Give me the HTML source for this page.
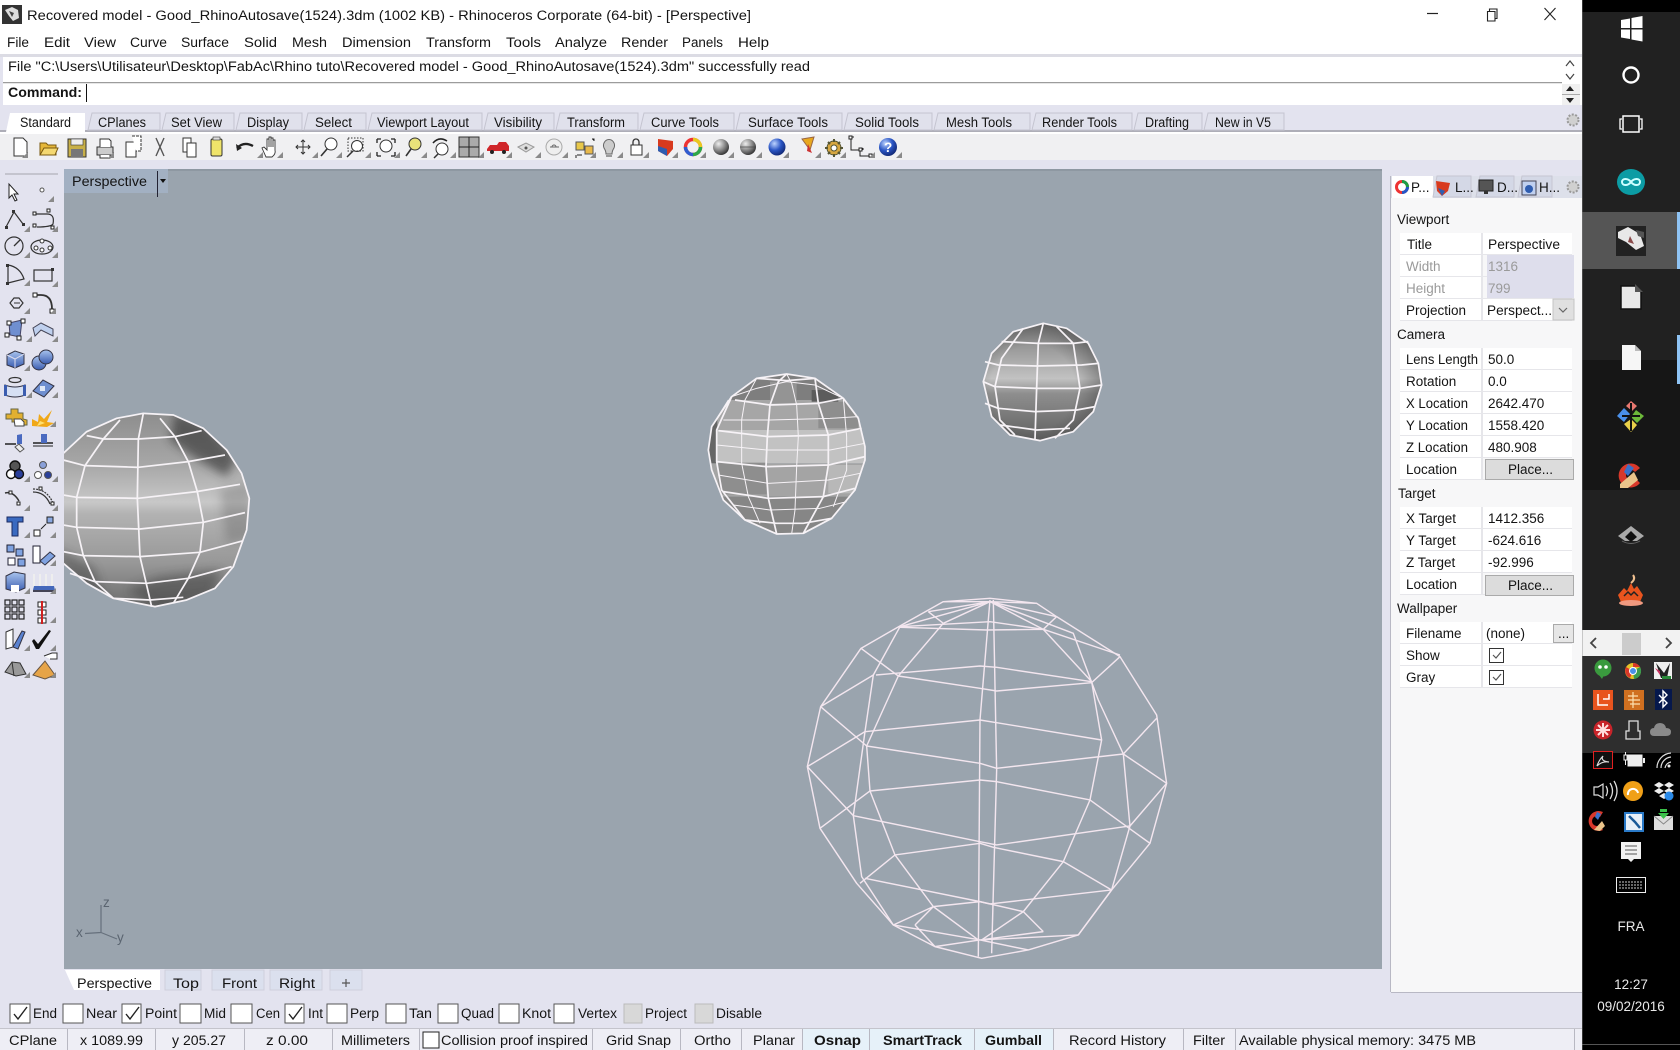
<!DOCTYPE html>
<html lang="en">
<head>
<meta charset="utf-8">
<title>Rhinoceros</title>
<style>
html,body{margin:0;padding:0;background:#e3e3ef;width:1680px;height:1050px;overflow:hidden}
svg{display:block;filter:blur(.3px)}
text{font-family:"Liberation Sans",sans-serif;font-size:13.5px;fill:#141414}
.b{font-weight:bold}
.g{fill:#9a9a9a}
.w{fill:#e8e8e8}
.ln{fill:none;stroke:#f6f2f6;stroke-width:5.2;stroke-linejoin:round}
.wf{fill:none;stroke:#f3e6ef;stroke-width:4.3;stroke-linejoin:round}
.ic{fill:none;stroke:#333;stroke-width:1.2}
</style>
</head>
<body>
<svg xmlns="http://www.w3.org/2000/svg" width="1680" height="1050" viewBox="0 0 1680 1050">
<defs>
<path id="f" d="M0 6L6 6L6 0Z" fill="#8a8a8a"/>
<filter id="bl" x="-30%" y="-30%" width="160%" height="160%"><feGaussianBlur stdDeviation="14"/></filter>
<linearGradient id="s1" x1="0" y1="0" x2="0" y2="1">
<stop offset="0" stop-color="#8c8c8c"/><stop offset=".28" stop-color="#a8a8a8"/><stop offset=".46" stop-color="#c8c8c8"/><stop offset=".52" stop-color="#b2b2b2"/><stop offset=".76" stop-color="#989898"/><stop offset="1" stop-color="#6a6a6a"/>
</linearGradient>
<radialGradient id="s1r" cx=".42" cy=".55" r=".6">
<stop offset=".6" stop-color="#333" stop-opacity="0"/><stop offset="1" stop-color="#222" stop-opacity=".55"/>
</radialGradient>
<linearGradient id="s3" x1="0" y1="0" x2="0" y2="1">
<stop offset="0" stop-color="#7a7a7a"/><stop offset=".25" stop-color="#a0a0a0"/><stop offset=".47" stop-color="#c2c2c2"/><stop offset=".6" stop-color="#8e8e8e"/><stop offset="1" stop-color="#606060"/>
</linearGradient>
<linearGradient id="blue" x1="0" y1="0" x2="0" y2="1"><stop offset="0" stop-color="#a9c4ee"/><stop offset="1" stop-color="#3a5cb0"/></linearGradient>
<radialGradient id="ball" cx=".35" cy=".3" r=".8"><stop offset="0" stop-color="#eee"/><stop offset=".6" stop-color="#777"/><stop offset="1" stop-color="#222"/></radialGradient>
<radialGradient id="bball" cx=".35" cy=".3" r=".8"><stop offset="0" stop-color="#bcd3ff"/><stop offset=".5" stop-color="#2a55c4"/><stop offset="1" stop-color="#0c1f66"/></radialGradient>
<clipPath id="vp"><rect x="64" y="169" width="1318" height="800"/></clipPath>
<clipPath id="c1"><polygon points="-90,340 -40,250 10,190 80,125 170,85 250,70 340,75 430,115 500,180 545,250 568,325 560,420 520,530 465,595 380,630 285,650 160,625 80,580 10,520 -40,450"/></clipPath>
</defs>

<!-- base -->
<rect width="1680" height="1050" fill="#e3e3ef"/>
<rect width="1582" height="54" fill="#fff"/>
<rect y="54" width="1582" height="3" fill="#dcdce4"/>
<rect y="57" width="1582" height="48" fill="#fff"/>
<rect y="82" width="1562" height="1" fill="#9c9c9c"/>
<rect y="83" width="1562" height="1" fill="#e6e6e6"/>
<rect x="0" y="57" width="3" height="48" fill="#e3e3ef"/>

<!-- title -->
<rect x="2" y="5" width="20" height="19" fill="#333"/>
<path d="M5 10L12 7L18 10L19 18L13 21L9 16Z" fill="#ddd"/><path d="M9 11L14 13L12 17Z" fill="#444"/>
<text x="27" y="20" textLength="724" lengthAdjust="spacingAndGlyphs">Recovered model - Good_RhinoAutosave(1524).3dm (1002 KB) - Rhinoceros Corporate (64-bit) - [Perspective]</text>
<path d="M1427 13.5H1438" stroke="#222" stroke-width="1.2"/>
<path d="M1487.5 11.5h7.5v9.5h-7.5zM1489.5 11.5v-2.5h7.5v9.5h-2" fill="none" stroke="#222" stroke-width="1.1"/>
<path d="M1544.5 8L1555.5 20M1555.5 8L1544.5 20" stroke="#222" stroke-width="1.1"/>

<!-- menu -->
<g>
<text x="7" y="47" textLength="22" lengthAdjust="spacingAndGlyphs">File</text>
<text x="44" y="47" textLength="26" lengthAdjust="spacingAndGlyphs">Edit</text>
<text x="84" y="47" textLength="32" lengthAdjust="spacingAndGlyphs">View</text>
<text x="130" y="47" textLength="37" lengthAdjust="spacingAndGlyphs">Curve</text>
<text x="181" y="47" textLength="48" lengthAdjust="spacingAndGlyphs">Surface</text>
<text x="244" y="47" textLength="33" lengthAdjust="spacingAndGlyphs">Solid</text>
<text x="292" y="47" textLength="35" lengthAdjust="spacingAndGlyphs">Mesh</text>
<text x="342" y="47" textLength="69" lengthAdjust="spacingAndGlyphs">Dimension</text>
<text x="426" y="47" textLength="65" lengthAdjust="spacingAndGlyphs">Transform</text>
<text x="506" y="47" textLength="35" lengthAdjust="spacingAndGlyphs">Tools</text>
<text x="555" y="47" textLength="52" lengthAdjust="spacingAndGlyphs">Analyze</text>
<text x="621" y="47" textLength="47" lengthAdjust="spacingAndGlyphs">Render</text>
<text x="682" y="47" textLength="41" lengthAdjust="spacingAndGlyphs">Panels</text>
<text x="738" y="47" textLength="31" lengthAdjust="spacingAndGlyphs">Help</text>
</g>

<!-- command -->
<text x="8" y="71" textLength="802" lengthAdjust="spacingAndGlyphs">File "C:\Users\Utilisateur\Desktop\FabAc\Rhino tuto\Recovered model - Good_RhinoAutosave(1524).3dm" successfully read</text>
<text class="b" x="8" y="97" textLength="74" lengthAdjust="spacingAndGlyphs">Command:</text>
<rect x="86" y="84" width="1" height="18" fill="#111"/>
<path d="M1566 66L1570 61L1574 66M1566 74L1570 79L1574 74" fill="none" stroke="#444" stroke-width="1.2"/>
<rect x="1562" y="84" width="18" height="21" fill="#f0f0f0"/>
<path d="M1566 91L1570 86L1574 91ZM1566 98L1570 103L1574 98Z" fill="#222"/>
<rect x="1562" y="94" width="18" height="1" fill="#aaa"/>

<!-- toolbar tabs -->
<rect x="0" y="130" width="1582" height="2" fill="#aeaeb8"/>
<rect x="0" y="132" width="1582" height="2" fill="#fff"/>
<rect x="0" y="134" width="1582" height="26" fill="#f0f0f2"/>
<g fill="#e0e1ec" stroke="#c4c4d0" stroke-width="1">
<path d="M88 130L92 113H160V130ZM162 130L166 113H234V130ZM236 130L240 113H302V130ZM304 130L308 113H366V130ZM368 130L372 113H482V130ZM484 130L488 113H554V130ZM556 130L560 113H638V130ZM640 130L644 113H734V130ZM736 130L740 113H842V130ZM844 130L848 113H932V130ZM934 130L938 113H1030V130ZM1032 130L1036 113H1132V130ZM1134 130L1138 113H1202V130ZM1204 130L1208 113H1284V130Z"/>
</g>
<path d="M6 132L10 113H85V132Z" fill="#fff"/>
<g font-size="13">
<text x="20" y="127" textLength="51" lengthAdjust="spacingAndGlyphs">Standard</text>
<text x="98" y="127" textLength="48" lengthAdjust="spacingAndGlyphs">CPlanes</text>
<text x="171" y="127" textLength="51" lengthAdjust="spacingAndGlyphs">Set View</text>
<text x="247" y="127" textLength="42" lengthAdjust="spacingAndGlyphs">Display</text>
<text x="315" y="127" textLength="37" lengthAdjust="spacingAndGlyphs">Select</text>
<text x="377" y="127" textLength="92" lengthAdjust="spacingAndGlyphs">Viewport Layout</text>
<text x="494" y="127" textLength="48" lengthAdjust="spacingAndGlyphs">Visibility</text>
<text x="567" y="127" textLength="58" lengthAdjust="spacingAndGlyphs">Transform</text>
<text x="651" y="127" textLength="68" lengthAdjust="spacingAndGlyphs">Curve Tools</text>
<text x="748" y="127" textLength="80" lengthAdjust="spacingAndGlyphs">Surface Tools</text>
<text x="855" y="127" textLength="64" lengthAdjust="spacingAndGlyphs">Solid Tools</text>
<text x="946" y="127" textLength="66" lengthAdjust="spacingAndGlyphs">Mesh Tools</text>
<text x="1042" y="127" textLength="75" lengthAdjust="spacingAndGlyphs">Render Tools</text>
<text x="1145" y="127" textLength="44" lengthAdjust="spacingAndGlyphs">Drafting</text>
<text x="1215" y="127" textLength="56" lengthAdjust="spacingAndGlyphs">New in V5</text>
</g>
<circle cx="1573" cy="120" r="5.5" fill="#d0d0d0" stroke="#999" stroke-width="2" stroke-dasharray="2 1.5"/>

<!-- top toolbar icons -->
<g>
<path d="M14 138h9l4 4v14H14z" fill="#fff" stroke="#333"/>
<path d="M40 155V143h6l2 2h8v10z" fill="#e5b73a" stroke="#7a5a10"/><path d="M40 155l4-7h14l-3 7z" fill="#f4d870" stroke="#7a5a10"/>
<rect x="68" y="139" width="18" height="18" fill="#c8b048" stroke="#333"/><rect x="71" y="139" width="12" height="6" fill="#eee" stroke="#333" stroke-width=".6"/><rect x="71" y="149" width="12" height="8" fill="#777"/>
<path d="M97 147h16v8H97z" fill="#ccc" stroke="#333"/><path d="M100 147v-8h9l2 2v6M100 155v3h10v-3" fill="#fff" stroke="#333"/>
<path d="M126 142h10v15h-10z" fill="#fff" stroke="#333"/><path d="M132 136h9v15h-5" fill="#fff" stroke="#333" stroke-dasharray="3 1"/>
<path d="M156 138L164 156M164 138L156 156" stroke="#555" stroke-width="1.4"/>
<path d="M183 138h8v14h-8z" fill="#fff" stroke="#333"/><path d="M187 143h9v14h-9z" fill="#fff" stroke="#333"/>
<rect x="211" y="139" width="11" height="17" rx="1.5" fill="#efe46a" stroke="#333"/><rect x="213" y="137" width="7" height="3" fill="#ddd" stroke="#333" stroke-width=".6"/>
<path d="M237 148q7-7 16-2" fill="none" stroke="#222" stroke-width="2.4"/><path d="M236 144l1 7 5-3z" fill="#222"/>
<path d="M266 157l-4-9 2-1 3 3v-11h2v8-10h2v10-9h2v9-7h2v10q1 4-3 7h-6z" fill="#fff" stroke="#333" stroke-width=".9"/>
<path d="M303 140v14M296 147h14" stroke="#333"/><path d="M301 142l2-2 2 2M301 152l2 2 2-2M298 145l-2 2 2 2M308 145l2 2-2 2" fill="none" stroke="#333"/>
<circle cx="331" cy="144" r="6" fill="#fff" stroke="#333"/><path d="M327 149l-6 7" stroke="#333" stroke-width="1.6"/>
<circle cx="357" cy="146" r="5.5" fill="#fff" stroke="#333"/><path d="M353 151l-6 6" stroke="#333" stroke-width="1.5"/><rect x="348" y="138" width="15" height="13" fill="none" stroke="#333" stroke-dasharray="1.5 1.5"/>
<circle cx="386" cy="146" r="6" fill="#fff" stroke="#333"/><path d="M377 139h4M377 139v4M395 139h-4M395 139v4M377 156h4M377 156v-4M395 156h-4M395 156v-4" stroke="#222" stroke-width="1.3"/>
<circle cx="415" cy="144" r="6" fill="#e9e27a" stroke="#333"/><path d="M411 149l-5 7" stroke="#333" stroke-width="1.6"/>
<circle cx="442" cy="149" r="6" fill="#fff" stroke="#333"/><path d="M433 143q6-7 14-2" fill="none" stroke="#222" stroke-width="1.6"/><path d="M438 154l-4 4" stroke="#333" stroke-width="1.5"/>
<rect x="459" y="137" width="20" height="20" fill="#aaa" stroke="#333"/><path d="M469 137v20M459 147h20" stroke="#222"/>
<path d="M487 149l3-4h7l2-3h7l3 4v5h-22z" fill="#d0262a"/><circle cx="492" cy="152" r="2" fill="#222"/><circle cx="504" cy="152" r="2" fill="#222"/>
<path d="M518 147l8-4 8 4-8 5z" fill="#ddd" stroke="#999"/><circle cx="526" cy="148" r="1.5" fill="#555"/>
<circle cx="554" cy="147" r="8" fill="#eee" stroke="#aaa"/><path d="M550 147h9M554 147m-2 0a2 2 0 1 1 4 0" fill="none" stroke="#666"/>
<rect x="576" y="142" width="8" height="8" fill="#e8c84a" stroke="#555"/><rect x="585" y="146" width="8" height="8" fill="#e8b84a" stroke="#555"/><path d="M577 155h5M592 139h2v2M576 158v-3" stroke="#222"/>
<path d="M604 148a5.5 6 0 1 1 10 0q-2 3-2 6h-6q0-3-2-6z" fill="#ccc" stroke="#666"/><path d="M606 156h6" stroke="#444"/>
<rect x="631" y="145" width="11" height="10" fill="#fff" stroke="#333"/><path d="M633 145v-3a3 3 0 0 1 6 0v3" fill="none" stroke="#333" stroke-width="1.3"/>
<path d="M658 139l15 2v8l-6 7-9-5z" fill="#d83a1e"/><path d="M658 146l9 3v7l-9-5z" fill="#2f5db0"/>
<circle cx="693" cy="147" r="7.5" fill="none" stroke="#e33" stroke-width="3.5"/><path d="M693 139.5a7.5 7.5 0 0 1 7.5 7.5" fill="none" stroke="#e9c81e" stroke-width="3.5"/><path d="M700.5 147a7.5 7.5 0 0 1-7.5 7.5" fill="none" stroke="#2da84a" stroke-width="3.5"/><path d="M693 154.5a7.5 7.5 0 0 1-7.5-7.5" fill="none" stroke="#2f5dd0" stroke-width="3.5"/>
<circle cx="721" cy="147" r="8" fill="url(#ball)"/>
<circle cx="748" cy="147" r="8" fill="url(#ball)"/><path d="M740 147h16" stroke="#444" stroke-width=".7"/>
<circle cx="777" cy="147" r="8.5" fill="url(#bball)"/>
<path d="M802 139l12-2-4 13z" fill="#e8a81e" stroke="#964"/><path d="M808 144l4 9-5-2z" fill="#c33"/>
<circle cx="834" cy="148" r="7" fill="#d6a640" stroke="#553"/><circle cx="834" cy="148" r="3" fill="#fff" stroke="#553"/><path d="M834 139v3M834 154v3M825 148h3M840 148h3M828 142l2 2M838 152l2 2M840 142l-2 2M830 152l-2 2" stroke="#553" stroke-width="2"/>
<path d="M851 137v13h9v6h10M851 137h3M851 150h3M863 150v-2" fill="none" stroke="#222"/><rect x="849" y="136" width="3" height="3" fill="#fff" stroke="#222"/><rect x="859" y="148" width="3" height="3" fill="#fff" stroke="#222"/><rect x="869" y="154" width="3" height="3" fill="#fff" stroke="#222"/>
<circle cx="888" cy="147" r="9" fill="url(#bball)"/><text x="884" y="152" class="b" font-size="13" style="fill:#fff">?</text>
</g>
<g>
<use href="#f" x="22" y="152"/><use href="#f" x="108" y="152"/><use href="#f" x="257" y="152"/><use href="#f" x="277" y="152"/><use href="#f" x="312" y="152"/><use href="#f" x="336" y="152"/><use href="#f" x="365" y="152"/><use href="#f" x="394" y="152"/><use href="#f" x="421" y="152"/><use href="#f" x="450" y="152"/><use href="#f" x="478" y="152"/><use href="#f" x="506" y="152"/><use href="#f" x="535" y="152"/><use href="#f" x="562" y="152"/><use href="#f" x="590" y="152"/><use href="#f" x="617" y="152"/><use href="#f" x="643" y="152"/><use href="#f" x="672" y="152"/><use href="#f" x="700" y="152"/><use href="#f" x="728" y="152"/><use href="#f" x="756" y="152"/><use href="#f" x="783" y="152"/><use href="#f" x="815" y="152"/><use href="#f" x="840" y="152"/><use href="#f" x="869" y="152"/><use href="#f" x="896" y="152"/>
</g>

<!-- viewport -->
<rect x="64" y="169" width="1318" height="800" fill="#9aa4ae"/>
<rect x="64" y="169" width="1318" height="2" fill="#8e98a2"/>
<rect x="64" y="169" width="104" height="24" fill="#a2b0c2"/>
<text x="72" y="186" textLength="75" lengthAdjust="spacingAndGlyphs">Perspective</text>
<rect x="157" y="171" width="1" height="26" fill="#223"/>
<path d="M160 179h6l-3 4z" fill="#111"/>

<!-- sphere 1 -->
<g clip-path="url(#vp)">
<g transform="translate(60 390) scale(.3333)">
<g clip-path="url(#c1)">
<rect x="-100" y="60" width="700" height="600" fill="url(#s1)"/>
<path d="M345 70L440 100L530 200L500 260L400 200L330 150Z" fill="#2e2e2e" opacity=".6" filter="url(#bl)"/>
<path d="M200 600L300 560L480 540L460 620L300 660Z" fill="#333" opacity=".4" filter="url(#bl)"/>
<path d="M-20 470L100 530L140 640L40 600Z" fill="#333" opacity=".4" filter="url(#bl)"/>
<path d="M480 300L570 280L580 440L500 460Z" fill="#444" opacity=".25" filter="url(#bl)"/>
</g>
<polyline class="ln" points="10,190 80,125 170,85 250,70 340,75 430,115 500,180 545,250 568,325 560,420 520,530 465,595 380,630 285,650 160,625 80,580 10,520"/>
<polyline class="ln" points="80,137 130,147 235,147 345,140 425,122"/>
<polyline class="ln" points="10,210 75,227 235,232 385,215 495,195"/>
<polyline class="ln" points="10,315 50,322 235,325 410,305 540,283"/>
<polyline class="ln" points="10,405 50,412 240,417 430,397 555,368"/>
<polyline class="ln" points="10,485 70,497 240,500 420,487 550,452"/>
<polyline class="ln" points="30,550 105,575 260,580 385,565 515,530"/>
<polyline class="ln" points="160,625 270,630 370,622"/>
<polyline class="ln" points="250,70 235,148 232,325 240,500 275,650"/>
<polyline class="ln" points="180,90 130,147 75,227 50,322 50,412 70,497 105,575 160,625"/>
<polyline class="ln" points="300,85 345,140 385,215 412,305 430,397 420,487 385,565 340,640"/>
</g>
</g>

<!-- sphere 2 -->
<g transform="translate(690 310) scale(.3333)">
<clipPath id="c2"><polygon points="55,420 65,350 125,260 200,205 290,192 375,205 460,265 505,325 525,410 525,450 495,540 425,625 340,670 260,672 165,630 100,570 65,480"/></clipPath>
<g clip-path="url(#c2)">
<rect x="40" y="180" width="500" height="90" fill="#7e7e7e"/>
<rect x="40" y="270" width="500" height="90" fill="#a6a6a6"/>
<rect x="40" y="360" width="500" height="100" fill="#c2c2c2"/>
<rect x="40" y="460" width="500" height="100" fill="#a4a4a4"/>
<rect x="40" y="560" width="500" height="120" fill="#868686"/>
<rect x="40" y="270" width="42" height="190" fill="#666"/>
<rect x="85" y="458" width="145" height="95" fill="#8e8e8e"/>
<rect x="385" y="275" width="120" height="80" fill="#8e8e8e"/>
<rect x="415" y="465" width="100" height="85" fill="#b8b8b8"/>
<rect x="240" y="215" width="80" height="65" fill="#949494"/>
<rect x="365" y="240" width="80" height="35" fill="#5c5c5c"/>
</g>
<polygon class="ln" points="55,420 65,350 125,260 200,205 290,192 375,205 460,265 505,325 525,410 525,450 495,540 425,625 340,670 260,672 165,630 100,570 65,480"/>
<polyline class="ln" points="135,270 240,285 385,280 460,265"/>
<polyline class="ln" points="100,330 240,330 420,325 505,320" style="stroke-width:3"/>
<polyline class="ln" points="85,362 235,380 415,375 515,355"/>
<polyline class="ln" points="80,405 230,420 420,420 525,400" style="stroke-width:3"/>
<polyline class="ln" points="80,455 230,470 415,465 525,440"/>
<polyline class="ln" points="85,495 235,520 415,510 510,490" style="stroke-width:3"/>
<polyline class="ln" points="100,545 235,565 400,560 495,535"/>
<polyline class="ln" points="130,585 240,600 390,595 470,575" style="stroke-width:3"/>
<polyline class="ln" points="165,630 260,640 340,640 425,625"/>
<polyline class="ln" points="125,260 200,235 290,215 375,225 460,265" style="stroke-width:3"/>
<polyline class="ln" points="200,205 290,212 375,205"/>
<polyline class="ln" points="290,192 265,215 240,285 232,380 228,470 235,565 260,672"/>
<polyline class="ln" points="290,192 305,220 320,285 325,380 320,470 315,600 305,672" style="stroke-width:3"/>
<polyline class="ln" points="200,205 165,270 155,330 155,460 175,560 210,640" style="stroke-width:3"/>
<polyline class="ln" points="375,205 385,280 415,375 415,465 400,560 340,670"/>
<polyline class="ln" points="460,265 470,380 470,480 430,590" style="stroke-width:3"/>
<polyline class="ln" points="125,260 80,360 80,455 95,540 165,630"/>
<polyline class="ln" points="115,270 65,350 55,420 65,480" style="stroke-width:3"/>

<!-- sphere 3 -->
<polygon points="880,215 905,130 970,65 1060,40 1130,55 1195,100 1225,160 1235,225 1210,305 1150,365 1050,392 960,375 905,320" fill="url(#s3)"/>
<polygon points="880,215 905,130 970,65 1060,40 1130,55 1195,100 1225,160 1235,225 1210,305 1150,365 1050,392 960,375 905,320" fill="url(#s1r)" opacity=".7"/>
<polygon class="ln" points="880,215 905,130 970,65 1060,40 1130,55 1195,100 1225,160 1235,225 1210,305 1150,365 1050,392 960,375 905,320"/>
<polyline class="ln" points="935,95 1045,100 1150,100 1195,95"/>
<polyline class="ln" points="885,155 925,165 1040,168 1175,165 1225,160"/>
<polyline class="ln" points="880,215 915,230 1040,235 1170,235 1235,225"/>
<polyline class="ln" points="885,280 925,295 1035,305 1160,300 1215,290"/>
<polyline class="ln" points="930,345 1040,360 1140,355"/>
<polyline class="ln" points="1060,40 1045,100 1040,235 1035,390"/>
<polyline class="ln" points="1000,55 935,145 915,230 930,330 975,375"/>
<polyline class="ln" points="1100,50 1150,100 1170,235 1150,330 1095,385"/>
</g>

<!-- wireframe sphere -->
<g transform="translate(790 590) scale(.3333)">
<polygon class="wf" points="600,25 740,40 800,80 990,200 1100,375 1130,580 1080,760 965,900 865,1035 715,1080 575,1105 435,1070 310,1005 200,880 90,715 52,530 92,350 213,175 335,105 460,35"/>
<polyline class="wf" points="330,112 590,120 760,118 990,195"/>
<polyline class="wf" points="330,110 600,95 760,118"/>
<polyline class="wf" points="258,255 570,228 620,232 905,275"/>
<polyline class="wf" points="325,258 570,295 620,303 905,278"/>
<polyline class="wf" points="225,425 570,390 620,398 935,450"/>
<polyline class="wf" points="230,468 570,520 620,535 1000,492"/>
<polyline class="wf" points="240,603 570,570 620,575 900,630"/>
<polyline class="wf" points="190,677 570,755 620,765 1020,708"/>
<polyline class="wf" points="315,795 570,760 610,772 820,815"/>
<polyline class="wf" points="225,865 570,935 600,942 965,900"/>
<polyline class="wf" points="430,950 570,935 700,965"/>
<polyline class="wf" points="600,30 570,390 565,1100"/>
<polyline class="wf" points="610,30 620,540 605,1090"/>
<polyline class="wf" points="600,35 460,100 325,258 230,468 240,603 315,795 430,950 565,1050"/>
<polyline class="wf" points="600,35 330,110 250,255 225,425 190,677 215,860 310,1005"/>
<polyline class="wf" points="600,35 760,118 905,275 935,450 900,630 820,815 700,965 575,1050"/>
<polyline class="wf" points="600,35 850,130 925,330 1000,492 1020,708 965,900 865,1035"/>
<path class="wf" d="M213 175L325 258M92 350L230 468M52 530L225 425M52 530L190 677M90 715L240 603M210 880L315 795M310 1005L430 950M990 200L905 278M1100 385L1000 492M1130 580L1000 492M1130 580L1020 708M1080 760L900 630M965 900L820 815M760 1025L700 965M250 255L92 350M430 950L375 1005M865 1035L570 1050M310 1005L570 1050M435 1070L570 1050M715 1080L570 1050M460 35L600 35M740 40L600 35M415 65L600 35M800 80L600 35M415 65L460 100M800 80L760 118M435 1070L375 1005M760 1025L570 1050"/>
</g>

<!-- axis -->
<path d="M101 932.5V905M101 932.5L85 933.5M101 932.5L117 939" stroke="#66707c" stroke-width="1.2" fill="none"/>
<text x="103" y="907" font-size="12" style="fill:#5a6470">z</text>
<text x="76" y="937" font-size="12" style="fill:#5a6470">x</text>
<text x="117" y="942" font-size="12" style="fill:#5a6470">y</text>

<!-- viewport tabs -->
<path d="M65 970H160V990H74Z" fill="#fff"/>
<path d="M165 970h36v20h-36zM212 970h52v20h-52zM270 970h52v20h-52zM330 970h32v20h-32z" fill="#dbe0ee" stroke="#cfcfdc"/>
<text x="77" y="988" textLength="75" lengthAdjust="spacingAndGlyphs">Perspective</text>
<text x="173" y="988" textLength="26" lengthAdjust="spacingAndGlyphs">Top</text>
<text x="222" y="988" textLength="35" lengthAdjust="spacingAndGlyphs">Front</text>
<text x="279" y="988" textLength="36" lengthAdjust="spacingAndGlyphs">Right</text>
<path d="M346 979v8M342 983h8" stroke="#555" stroke-width="1.2"/>

<!-- osnap row -->
<g fill="#fff" stroke="#555" stroke-width="1">
<rect x="10" y="1004" width="20" height="19"/><rect x="63" y="1004" width="20" height="19"/><rect x="122" y="1004" width="19" height="19"/><rect x="180" y="1004" width="21" height="19"/><rect x="231" y="1004" width="21" height="19"/><rect x="285" y="1004" width="19" height="19"/><rect x="327" y="1004" width="20" height="19"/><rect x="386" y="1004" width="20" height="19"/><rect x="438" y="1004" width="20" height="19"/><rect x="499" y="1004" width="20" height="19"/><rect x="554" y="1004" width="20" height="19"/>
</g>
<rect x="624" y="1004" width="18" height="19" fill="#d8d8d8" stroke="#bbb"/><rect x="695" y="1004" width="18" height="19" fill="#d8d8d8" stroke="#bbb"/>
<path d="M14 1014l4 5 9-12M126 1014l4 5 9-12M289 1014l4 5 9-12" fill="none" stroke="#222" stroke-width="1.4"/>
<g>
<text x="33" y="1018" textLength="24" lengthAdjust="spacingAndGlyphs">End</text>
<text x="86" y="1018" textLength="31" lengthAdjust="spacingAndGlyphs">Near</text>
<text x="145" y="1018" textLength="32" lengthAdjust="spacingAndGlyphs">Point</text>
<text x="204" y="1018" textLength="22" lengthAdjust="spacingAndGlyphs">Mid</text>
<text x="256" y="1018" textLength="24" lengthAdjust="spacingAndGlyphs">Cen</text>
<text x="308" y="1018" textLength="15" lengthAdjust="spacingAndGlyphs">Int</text>
<text x="350" y="1018" textLength="29" lengthAdjust="spacingAndGlyphs">Perp</text>
<text x="409" y="1018" textLength="23" lengthAdjust="spacingAndGlyphs">Tan</text>
<text x="461" y="1018" textLength="33" lengthAdjust="spacingAndGlyphs">Quad</text>
<text x="522" y="1018" textLength="29" lengthAdjust="spacingAndGlyphs">Knot</text>
<text x="578" y="1018" textLength="39" lengthAdjust="spacingAndGlyphs">Vertex</text>
<text x="645" y="1018" textLength="42" lengthAdjust="spacingAndGlyphs">Project</text>
<text x="716" y="1018" textLength="46" lengthAdjust="spacingAndGlyphs">Disable</text>
</g>

<!-- status row -->
<rect x="0" y="1028" width="1582" height="22" fill="#eeeef5"/>
<rect x="0" y="1028" width="1582" height="1" fill="#c4c4cc"/>
<rect x="802" y="1029" width="251" height="21" fill="#e6f1f9"/>
<g fill="#b8b8c2">
<rect x="67" y="1029" width="1" height="21"/><rect x="155" y="1029" width="1" height="21"/><rect x="244" y="1029" width="1" height="21"/><rect x="332" y="1029" width="1" height="21"/><rect x="419" y="1029" width="1" height="21"/><rect x="592" y="1029" width="1" height="21"/><rect x="680" y="1029" width="1" height="21"/><rect x="741" y="1029" width="1" height="21"/><rect x="802" y="1029" width="1" height="21"/><rect x="869" y="1029" width="1" height="21"/><rect x="974" y="1029" width="1" height="21"/><rect x="1053" y="1029" width="1" height="21"/><rect x="1183" y="1029" width="1" height="21"/><rect x="1235" y="1029" width="1" height="21"/><rect x="1574" y="1029" width="1" height="21"/>
</g>
<rect x="423" y="1032" width="16" height="16" fill="#fff" stroke="#222"/>
<g>
<text x="9" y="1045" textLength="48" lengthAdjust="spacingAndGlyphs">CPlane</text>
<text x="80" y="1045" textLength="63" lengthAdjust="spacingAndGlyphs">x 1089.99</text>
<text x="172" y="1045" textLength="54" lengthAdjust="spacingAndGlyphs">y 205.27</text>
<text x="266" y="1045" textLength="42" lengthAdjust="spacingAndGlyphs">z 0.00</text>
<text x="341" y="1045" textLength="69" lengthAdjust="spacingAndGlyphs">Millimeters</text>
<text x="441" y="1045" textLength="147" lengthAdjust="spacingAndGlyphs">Collision proof inspired</text>
<text x="606" y="1045" textLength="65" lengthAdjust="spacingAndGlyphs">Grid Snap</text>
<text x="694" y="1045" textLength="37" lengthAdjust="spacingAndGlyphs">Ortho</text>
<text x="753" y="1045" textLength="42" lengthAdjust="spacingAndGlyphs">Planar</text>
<text class="b" x="814" y="1045" textLength="47" lengthAdjust="spacingAndGlyphs">Osnap</text>
<text class="b" x="883" y="1045" textLength="79" lengthAdjust="spacingAndGlyphs">SmartTrack</text>
<text class="b" x="985" y="1045" textLength="57" lengthAdjust="spacingAndGlyphs">Gumball</text>
<text x="1069" y="1045" textLength="97" lengthAdjust="spacingAndGlyphs">Record History</text>
<text x="1193" y="1045" textLength="32" lengthAdjust="spacingAndGlyphs">Filter</text>
<text x="1239" y="1045" textLength="237" lengthAdjust="spacingAndGlyphs">Available physical memory: 3475 MB</text>
</g>

<!-- left toolbar -->
<rect x="5" y="173" width="53" height="2" fill="#c4c4ce"/>
<g>
<path d="M9 184l0 14 3-3 3 6 2-1-3-6h4z" fill="#fff" stroke="#222" stroke-width="1"/>
<circle cx="42" cy="190" r="2" fill="#fff" stroke="#555"/>
<g class="ic" fill="none"><path d="M6 227L14 212L23 224"/></g><rect x="12" y="210" width="3" height="3" fill="#333"/><rect x="5" y="226" width="3" height="3" fill="#333"/><rect x="22" y="223" width="3" height="3" fill="#333"/>
<path class="ic" d="M35 214h12q8 0 6 10q-2 3-16 3"/><rect x="33" y="212" width="3" height="3" fill="#fff" stroke="#222"/><rect x="47" y="209" width="3" height="3" fill="#fff" stroke="#222"/><rect x="33" y="224" width="3" height="3" fill="#fff" stroke="#222"/><rect x="51" y="226" width="3" height="3" fill="#fff" stroke="#222"/>
<circle cx="14" cy="246" r="9" class="ic"/><path d="M14 246l6-6" stroke="#333" stroke-width="1.3"/>
<ellipse cx="42" cy="247" rx="11" ry="7" class="ic"/><circle cx="36" cy="248" r="2" fill="#fff" stroke="#333"/><circle cx="42" cy="241" r="2" fill="#fff" stroke="#333"/><circle cx="50" cy="248" r="2" fill="#fff" stroke="#333"/><circle cx="42" cy="250" r="2" fill="#fff" stroke="#333"/>
<path class="ic" d="M8 265v18M8 265q12 2 16 14l-16 4"/><rect x="6" y="264" width="3" height="3" fill="#333"/><rect x="6" y="282" width="3" height="3" fill="#333"/>
<rect x="34" y="270" width="18" height="11" class="ic"/><rect x="51" y="268" width="3" height="3" fill="#333"/>
<path class="ic" d="M10 303l4-5h5l4 5-4 5h-5z"/><path d="M14 303h6" stroke="#333"/>
<path class="ic" d="M34 295h7q11 0 11 14" style="stroke-width:1.8"/><rect x="33" y="293" width="4" height="4" fill="#fff" stroke="#222"/><rect x="50" y="309" width="4" height="4" fill="#fff" stroke="#222"/>
<path d="M9 323l13-3-2 17-10-2z" fill="#6f8fd0" stroke="#446"/><rect x="7" y="321" width="4" height="4" fill="#fff" stroke="#222"/><rect x="21" y="319" width="4" height="4" fill="#fff" stroke="#222"/><rect x="5" y="333" width="4" height="4" fill="#fff" stroke="#222"/><rect x="17" y="336" width="4" height="4" fill="#fff" stroke="#222"/>
<path d="M33 328l8-5 12 6v7l-12-6-6 6z" fill="#bfd0ee" stroke="#445"/>
<path d="M7 355l8-4 9 3v10l-9 4-8-3z" fill="url(#blue)" stroke="#334"/><path d="M7 355l8 4 9-5M15 359v9" stroke="#dde" fill="none"/>
<circle cx="39" cy="363" r="7" fill="url(#blue)" stroke="#334"/><circle cx="46" cy="357" r="7" fill="url(#blue)" stroke="#334"/>
<ellipse cx="15" cy="380" rx="6" ry="2.5" class="ic"/><path d="M5 385v10q10 4 20 0v-10q-10 4-20 0z" fill="#d6e0f4" stroke="#334"/><rect x="4" y="385" width="3" height="11" fill="#3b5db0"/><rect x="23" y="385" width="3" height="11" fill="#3b5db0"/>
<path d="M33 391l10-11 11 6-10 11z" fill="#6f8fd0" stroke="#334"/><rect x="40" y="386" width="5" height="5" fill="#dfe7f6"/>
<path d="M6 414h5v-5h7v4h5v6l4 1v5h-9v-3h-6v-3H6z" fill="#e2b030" stroke="#664"/><path d="M14 419h7l3 3v4h-9z" fill="#fff" stroke="#444"/>
<path d="M32 426v-7l6 3 1-8 5 5 8-9-5 12 7 1-7 4z" fill="#f0a818"/><path d="M37 426l3-5 5 2z" fill="#ffe070"/>
<path d="M5 444h11M20 436v8" stroke="#222" stroke-width="1.5"/><path d="M17 435l5-1v10l-5 0z" fill="#4a6ac0"/><path d="M15 447l5 5 4-3-5-5z" fill="#eee" stroke="#555"/>
<path d="M33 443h20" stroke="#222" stroke-width="1.5"/><path d="M33 446h20" stroke="#222"/><path d="M41 434h6v9h-6z" fill="#4a6ac0"/>
<circle cx="15" cy="466" r="5" fill="#555" stroke="#111" stroke-width="1.4"/><circle cx="11" cy="474" r="4.5" fill="#fff" stroke="#111" stroke-width="1.4"/><circle cx="19" cy="474" r="4.5" fill="#2a3f9a" stroke="#111" stroke-width="1.4"/>
<circle cx="43" cy="465" r="3.5" fill="#8aa0d8" stroke="#555"/><circle cx="38" cy="475" r="3.5" fill="#fff" stroke="#555"/><circle cx="48" cy="475" r="3.5" fill="#2a3f9a" stroke="#555"/>
<path class="ic" d="M5 493q8-2 14 8" style="stroke-width:1.5"/><rect x="9" y="491" width="3" height="3" fill="#fff" stroke="#222"/><rect x="17" y="502" width="3" height="3" fill="#fff" stroke="#222"/>
<path class="ic" d="M33 489q14 0 20 14" stroke-dasharray="2 1"/><path class="ic" d="M33 492q12 0 17 12"/><rect x="39" y="487" width="3" height="3" fill="#fff" stroke="#222"/><rect x="51" y="502" width="3" height="3" fill="#fff" stroke="#222"/>
<path d="M7 517h16v5h-5v14h-6v-14H7z" fill="#3a6ac0" stroke="#1a2a60"/>
<rect x="34" y="530" width="6" height="6" fill="#fff" stroke="#222"/><rect x="47" y="517" width="6" height="6" fill="#8aa8e0" stroke="#222"/><path d="M41 529l5-5" stroke="#222"/>
<rect x="7" y="545" width="7" height="7" fill="#7fa2e0" stroke="#223"/><rect x="16" y="549" width="7" height="7" fill="#7fa2e0" stroke="#223"/><rect x="8" y="558" width="7" height="7" fill="#fff" stroke="#223"/><rect x="18" y="559" width="7" height="7" fill="#7fa2e0" stroke="#223"/>
<rect x="33" y="546" width="7" height="17" fill="#fff" stroke="#223"/><path d="M40 561l10-9 5 4-10 9z" fill="#7fa2e0" stroke="#334"/>
<path d="M6 576l8-4 11 2v14l-9 4-10-3z" fill="url(#blue)" stroke="#334"/><rect x="11" y="585" width="8" height="7" fill="#fff"/>
<path d="M33 590h22v2H33z" fill="#445"/><path d="M34 574v14M40 574v14M46 574v14M52 574v14" stroke="#eee" stroke-width="2"/><path d="M34 586h20l1 4H33z" fill="#4468bb"/>
<g fill="none" stroke="#222" stroke-width="1.2"><rect x="5" y="600" width="5" height="5"/><rect x="12" y="600" width="5" height="5"/><rect x="19" y="600" width="5" height="5"/><rect x="5" y="607" width="5" height="5"/><rect x="12" y="607" width="5" height="5"/><rect x="19" y="607" width="5" height="5"/><rect x="5" y="614" width="5" height="5"/><rect x="12" y="614" width="5" height="5"/><rect x="19" y="614" width="5" height="5"/></g>
<rect x="38" y="602" width="8" height="5" fill="#fff" stroke="#222"/><rect x="38" y="610" width="8" height="5" fill="#fff" stroke="#222"/><rect x="38" y="618" width="8" height="5" fill="#fff" stroke="#222"/><path d="M42 601v23" stroke="#d02020" stroke-width="2"/>
<path d="M6 632l7-3v18l-7 2z" fill="#fff" stroke="#333"/><path d="M13 647l9-16 3 1-7 17z" fill="#5a82d0" stroke="#334"/>
<path d="M34 639l4 5 11-14 2 1-12 18h-3l-4-8z" fill="#111"/>
<path d="M5 672l7-10 8 1 6 11-10 2z" fill="#999" stroke="#333"/><path d="M12 662l2 14" stroke="#333"/>
<path d="M33 675l12-14 10 14-10 4z" fill="#e6a448" stroke="#654"/><path d="M44 656l8-3h5v6h-7" fill="#fff" stroke="#333"/>
</g>
<g>
<use href="#f" x="48" y="196"/><use href="#f" x="24" y="226"/><use href="#f" x="52" y="226"/><use href="#f" x="24" y="252"/><use href="#f" x="52" y="252"/><use href="#f" x="24" y="280"/><use href="#f" x="52" y="281"/><use href="#f" x="24" y="308"/><use href="#f" x="50" y="308"/><use href="#f" x="26" y="336"/><use href="#f" x="52" y="336"/><use href="#f" x="24" y="365"/><use href="#f" x="52" y="365"/><use href="#f" x="26" y="392"/><use href="#f" x="52" y="392"/><use href="#f" x="50" y="421"/><use href="#f" x="24" y="476"/><use href="#f" x="52" y="476"/><use href="#f" x="24" y="505"/><use href="#f" x="52" y="505"/><use href="#f" x="24" y="532"/><use href="#f" x="50" y="532"/><use href="#f" x="50" y="560"/><use href="#f" x="24" y="588"/><use href="#f" x="50" y="588"/><use href="#f" x="50" y="617"/><use href="#f" x="24" y="645"/><use href="#f" x="50" y="645"/><use href="#f" x="24" y="672"/><use href="#f" x="50" y="672"/>
</g>

<!-- right panel -->
<rect x="1382" y="169" width="8" height="823" fill="#e3e3ef"/>
<rect x="1390" y="176" width="192" height="22" fill="#dde0ea"/>
<rect x="1391" y="198" width="191" height="794" fill="#f7f7f8"/>
<rect x="1390" y="176" width="1" height="816" fill="#b8b8c4"/>
<rect x="1391" y="992" width="191" height="1" fill="#b8b8c4"/>
<rect x="1392" y="176" width="41" height="22" fill="#fff"/>
<path d="M1433 197l4-21h34v21zM1476 197l4-21h34v21zM1518 197l4-21h30v21z" fill="#d4d8e6" stroke="#c6c6d2"/>
<circle cx="1402" cy="187" r="5.5" fill="none" stroke="#e33" stroke-width="3"/><path d="M1402 181.5a5.5 5.5 0 0 1 5.5 5.5" fill="none" stroke="#1d9d46" stroke-width="3"/><path d="M1407.5 187a5.500 5.500 0 0 1-5.500 5.500" fill="none" stroke="#2457c8" stroke-width="3"/>
<path d="M1436 181l14 2-2 8-6 5-5-5z" fill="#d83a1e"/><path d="M1438 188l7 3-3 5z" fill="#2f5db0"/>
<rect x="1479" y="180" width="14" height="11" fill="#555" stroke="#222"/><rect x="1484" y="191" width="4" height="3" fill="#333"/>
<rect x="1522" y="181" width="14" height="14" fill="#c0d0f0" stroke="#445"/><circle cx="1529" cy="189" r="4" fill="#2f5db0"/>
<text x="1411" y="192" font-size="13">P...</text><text x="1455" y="192" font-size="13">L...</text><text x="1497" y="192" font-size="13">D...</text><text x="1539" y="192" font-size="13">H...</text>
<circle cx="1573" cy="187" r="5.5" fill="#d0d0d0" stroke="#999" stroke-width="2" stroke-dasharray="2 1.5"/>

<g fill="#fff">
<rect x="1400" y="233" width="172" height="21"/><rect x="1400" y="255" width="81" height="21"/><rect x="1400" y="277" width="81" height="21"/><rect x="1400" y="299" width="172" height="21"/>
<rect x="1400" y="348" width="172" height="21"/><rect x="1400" y="370" width="172" height="21"/><rect x="1400" y="392" width="172" height="21"/><rect x="1400" y="414" width="172" height="21"/><rect x="1400" y="436" width="172" height="21"/><rect x="1400" y="458" width="81" height="21"/>
<rect x="1400" y="507" width="172" height="21"/><rect x="1400" y="529" width="172" height="21"/><rect x="1400" y="551" width="172" height="21"/><rect x="1400" y="573" width="81" height="21"/>
<rect x="1400" y="622" width="172" height="21"/><rect x="1400" y="644" width="172" height="21"/><rect x="1400" y="666" width="172" height="21"/>
</g>
<g fill="#e6e6ea">
<rect x="1400" y="254" width="172" height="1"/><rect x="1400" y="276" width="172" height="1"/><rect x="1400" y="298" width="172" height="1"/><rect x="1400" y="320" width="172" height="1"/><rect x="1400" y="369" width="172" height="1"/><rect x="1400" y="391" width="172" height="1"/><rect x="1400" y="413" width="172" height="1"/><rect x="1400" y="435" width="172" height="1"/><rect x="1400" y="457" width="172" height="1"/><rect x="1400" y="479" width="172" height="1"/><rect x="1400" y="528" width="172" height="1"/><rect x="1400" y="550" width="172" height="1"/><rect x="1400" y="572" width="172" height="1"/><rect x="1400" y="594" width="172" height="1"/><rect x="1400" y="643" width="172" height="1"/><rect x="1400" y="665" width="172" height="1"/><rect x="1400" y="687" width="172" height="1"/>
<rect x="1481" y="233" width="2" height="88"/><rect x="1481" y="348" width="2" height="132"/><rect x="1481" y="507" width="2" height="88"/><rect x="1481" y="622" width="2" height="66"/>
</g>
<rect x="1487" y="255" width="87" height="43" fill="#dedeec"/>
<rect x="1553" y="299" width="21" height="21" fill="#e0e0e0" stroke="#c4c4c4"/><path d="M1559 308l4 4 4-4" fill="none" stroke="#666" stroke-width="1.2"/>
<rect x="1485.500" y="459.500" width="88" height="20" fill="#dcdcdc" stroke="#aaa"/>
<rect x="1485.500" y="575.500" width="88" height="20" fill="#dcdcdc" stroke="#aaa"/>
<rect x="1553.500" y="624.500" width="20" height="18" fill="#e6e6e6" stroke="#aaa"/>
<rect x="1489.500" y="648.500" width="14" height="14" fill="#fff" stroke="#333"/><rect x="1489.500" y="670.500" width="14" height="14" fill="#fff" stroke="#333"/>
<path d="M1493 655l3 3 5-6M1493 677l3 3 5-6" fill="none" stroke="#555" stroke-width="1.2"/>
<g>
<text x="1397" y="224">Viewport</text>
<text x="1407" y="249">Title</text><text x="1488" y="249" textLength="72" lengthAdjust="spacingAndGlyphs">Perspective</text>
<text class="g" x="1406" y="271">Width</text><text class="g" x="1488" y="271">1316</text>
<text class="g" x="1406" y="293">Height</text><text class="g" x="1488" y="293">799</text>
<text x="1406" y="315">Projection</text><text x="1487" y="315" textLength="65" lengthAdjust="spacingAndGlyphs">Perspect...</text>
<text x="1397" y="339">Camera</text>
<text x="1406" y="364" textLength="72" lengthAdjust="spacingAndGlyphs">Lens Length</text><text x="1488" y="364">50.0</text>
<text x="1406" y="386">Rotation</text><text x="1488" y="386">0.0</text>
<text x="1406" y="408" textLength="62" lengthAdjust="spacingAndGlyphs">X Location</text><text x="1488" y="408">2642.470</text>
<text x="1406" y="430" textLength="62" lengthAdjust="spacingAndGlyphs">Y Location</text><text x="1488" y="430">1558.420</text>
<text x="1406" y="452" textLength="62" lengthAdjust="spacingAndGlyphs">Z Location</text><text x="1488" y="452">480.908</text>
<text x="1406" y="474">Location</text><text x="1508" y="474">Place...</text>
<text x="1398" y="498">Target</text>
<text x="1406" y="523">X Target</text><text x="1488" y="523">1412.356</text>
<text x="1406" y="545">Y Target</text><text x="1488" y="545">-624.616</text>
<text x="1406" y="567">Z Target</text><text x="1488" y="567">-92.996</text>
<text x="1406" y="589">Location</text><text x="1508" y="590">Place...</text>
<text x="1397" y="613">Wallpaper</text>
<text x="1406" y="638">Filename</text><text x="1486" y="638">(none)</text><text x="1558" y="638" font-size="11">...</text>
<text x="1406" y="660">Show</text>
<text x="1406" y="682">Gray</text>
</g>

<!-- taskbar -->
<rect x="1582" y="0" width="98" height="1050" fill="#000"/>
<rect x="1582" y="12" width="98" height="618" fill="#212121"/>
<rect x="1582" y="360" width="98" height="130" fill="#161616"/>
<rect x="1582" y="212" width="98" height="57" fill="#555"/>
<rect x="1677" y="212" width="3" height="57" fill="#8fc4f5"/>
<rect x="1677" y="335" width="3" height="49" fill="#8fc4f5"/>
<rect x="1582" y="630" width="98" height="26" fill="#f2f2f2"/>
<rect x="1622" y="633" width="19" height="22" fill="#ccc"/>
<path d="M1596 638l-5 5 5 5M1666 638l5 5-5 5" fill="none" stroke="#444" stroke-width="1.8"/>
<rect x="1582" y="656" width="98" height="97" fill="#2e2e2e"/>

<path d="M1621 20l9-1.500v9.500h-9zM1631.500 18l11-2v12h-11zM1621 29.500h9v9.500l-9-1.500zM1631.500 29.500h11v12l-11-2z" fill="#fff"/>
<circle cx="1631" cy="75" r="7.500" fill="none" stroke="#fff" stroke-width="2.400"/>
<rect x="1623" y="116" width="16" height="16" fill="none" stroke="#fff" stroke-width="1.500"/><path d="M1622 119h-2v10h2M1640 119h2v10h-2" fill="none" stroke="#fff" stroke-width="1.300"/>
<ellipse cx="1631" cy="182" rx="14" ry="13" fill="#0c9ca4"/><path d="M1631 182c-3-4-9-4-9 0s6 4 9 0c3-4 9-4 9 0s-6 4-9 0z" fill="none" stroke="#cff" stroke-width="2"/>
<rect x="1616" y="226" width="30" height="30" fill="#222"/><path d="M1618 232l10-5 12 7 4 12-8 4-10-8-8-4z" fill="#e8e8e8"/><path d="M1630 236l4 8-6-2z" fill="#8a4a4a"/><path d="M1636 230l8 2v6l-6-2z" fill="#555"/>
<path d="M1621 286h14l6 6v17h-20z" fill="#e8e8e8" stroke="#111" stroke-width="1.500"/><path d="M1635 284l8 8h-8z" fill="#555"/>
<path d="M1622 345h13l6 6v19h-19z" fill="#f6f6f6"/><path d="M1635 345v6h6z" fill="#bbb"/>
<path d="M1617 416l7-8 6 6-6 8z" fill="#4a8fe8"/><path d="M1626 406l5-5 6 5-5 5z" fill="#e87870"/><path d="M1636 410l8 6-7 7-6-6z" fill="#6cb83a"/><path d="M1624 424l7-5 6 6-6 7z" fill="#e8d04a"/><path d="M1631 403v28M1622 416h18" stroke="#111" stroke-width="2"/>
<path d="M1640 468a12 12 0 1 0 0 15l-5-5a5 5 0 1 1 0-6z" fill="#d8382a"/><path d="M1620 484l14-12 4 8-10 8h-8z" fill="#eac48a"/><path d="M1628 464l6 4-6 8-4-4z" fill="#3a70c8"/>
<path d="M1631 526l13 10-7 5h-12l-7-5z" fill="#aaa"/><path d="M1631 531l6 6-6 5-6-5z" fill="#111"/><path d="M1622 541q9 5 18 0" fill="none" stroke="#666"/>
<path d="M1618 595l6-7 3 3 4-8 3 6 3-3 6 9-3 7h-19z" fill="#e8541e"/><path d="M1631 583q5-4 2-8" fill="none" stroke="#f0c090" stroke-width="2"/><ellipse cx="1631" cy="603" rx="12" ry="3" fill="#f09a80"/><path d="M1624 596l4-4 3 3 3-3 4 4" fill="none" stroke="#222" stroke-width="1.500"/>

<!-- tray -->
<circle cx="1603" cy="668" r="8.500" fill="#3a9a3e"/><path d="M1599 675l3 4 2-4z" fill="#3a9a3e"/><circle cx="1600" cy="667" r="1.800" fill="#fff"/><circle cx="1606" cy="667" r="1.800" fill="#fff"/>
<circle cx="1633" cy="671" r="8" fill="#e8c228"/><path d="M1633 663a8 8 0 0 1 7 4h-7z" fill="#d8382a"/><path d="M1626 667a8 8 0 0 0 4 11l3-7z" fill="#d8382a"/><path d="M1640 667a8 8 0 0 1-6 12l-1-8z" fill="#3a9a4e"/><circle cx="1633" cy="671" r="3.500" fill="#4a90e8" stroke="#fff"/>
<rect x="1654" y="662" width="18" height="17" fill="#f0f0f0"/><path d="M1656 663l8 10 6-10-3 15h-6z" fill="#222"/><path d="M1662 676h9v3h-9z" fill="#2a8a3a"/><path d="M1655 668l5 3v4z" fill="#c83060"/>
<rect x="1593" y="690" width="20" height="20" fill="#e8541e"/><path d="M1598 694v11h10M1603 699h6v-5" fill="none" stroke="#fff" stroke-width="1.500"/>
<rect x="1624" y="690" width="20" height="20" fill="#d07020"/><path d="M1628 696h10M1628 700h12M1630 704h10M1633 692v16" stroke="#fce0b0" stroke-width="1.200"/>
<rect x="1655" y="689" width="17" height="21" fill="#06184c"/><path d="M1659 695l8 8-4 4v-16l4 4-8 8" fill="none" stroke="#fff" stroke-width="1.400"/>
<circle cx="1603" cy="730" r="9.500" fill="#c8242a"/><path d="M1603 723v14M1596 730h14M1598 725l10 10M1608 725l-10 10" stroke="#fdd" stroke-width="2"/>
<path d="M1629 721h9v10h2v8h-14v-8h3z" fill="none" stroke="#ddd" stroke-width="1.300"/>
<path d="M1654 736q-4 0-4-4t4-4q1-5 6-5t6 5q5 0 5 4t-5 4z" fill="#8a8a8a"/>
<rect x="1593.500" y="751.500" width="19" height="17" fill="#101010" stroke="#e02020"/><path d="M1597 766q2-6 6-10q-3 5 6 6q-7-1-12 4z" fill="none" stroke="#ddd" stroke-width="1.200"/>
<rect x="1628" y="755" width="14" height="11" fill="#eee" stroke="#eee"/><rect x="1643" y="758" width="2" height="5" fill="#eee"/><path d="M1624 755h3v5h-3zM1625.500 752v3M1625.500 760v5" stroke="#eee" fill="none"/>
<path d="M1657 768a15 15 0 0 1 14-15M1661 768a11 11 0 0 1 10-11M1665 768a7 7 0 0 1 6-6" fill="none" stroke="#ddd" stroke-width="1.200"/><circle cx="1669" cy="766" r="1.500" fill="#eee"/>
<path d="M1594 787h4l5-3v14l-5-3h-4z" fill="none" stroke="#ddd" stroke-width="1.200"/><path d="M1606 786q3 5 0 10M1610 783q5 8 0 16M1614 781q6 10 0 20" fill="none" stroke="#ddd" stroke-width="1.300"/>
<circle cx="1633" cy="791" r="10" fill="#f0a018"/><path d="M1628 795a5 5 0 1 1 10-2" fill="none" stroke="#fff" stroke-width="2"/>
<path d="M1654 785l5-3 5 3-5 3zM1664 785l5-3 5 3-5 3zM1654 791l5-3 5 3-5 3zM1664 791l5-3 5 3-5 3zM1659 796l5-3 5 3-5 3z" fill="#eee"/><circle cx="1669" cy="796" r="4.500" fill="#2a8ae8"/>
<path d="M1603 812a10 10 0 1 0 0 18l-3-5a5 5 0 1 1 0-8z" fill="#d8382a"/><path d="M1594 830l8-9 3 5-5 5z" fill="#eac48a"/><path d="M1597 812l4 2-3 6-3-3z" fill="#3a70c8"/>
<rect x="1624" y="812" width="20" height="20" fill="#2a7ac8"/><rect x="1626" y="814" width="16" height="16" fill="#e8f0f8"/><path d="M1629 816l6 6 5 6" stroke="#1a5a98" stroke-width="2.500" fill="none"/>
<rect x="1654" y="816" width="19" height="14" fill="#ddd"/><path d="M1654 816l9.500 8 9.500-8" fill="none" stroke="#888"/><path d="M1660 812h7v-3h-7zM1658 813h11l-5.500 6z" fill="#3ac04a"/>
<path d="M1621 842h20v17h-7l-3 3-3-3h-7z" fill="#f2f2f2"/><path d="M1625 846h12M1625 850h12M1625 854h12" stroke="#555"/>
<rect x="1616.500" y="877.500" width="29" height="15" fill="none" stroke="#eee"/><path d="M1619 882h24M1619 885h24M1619 888h24" stroke="#ccc" stroke-dasharray="2 1"/>
<text x="1631" y="931" text-anchor="middle" class="w" font-size="14">FRA</text>
<text x="1631" y="989" text-anchor="middle" class="w" font-size="13.500">12:27</text>
<text x="1631" y="1011" text-anchor="middle" class="w" font-size="13.500">09/02/2016</text>
<rect x="1582" y="1044" width="98" height="1" fill="#555"/>
<rect x="1582" y="0" width="1" height="1050" fill="#888" opacity=".4"/>
</svg>
</body>
</html>
